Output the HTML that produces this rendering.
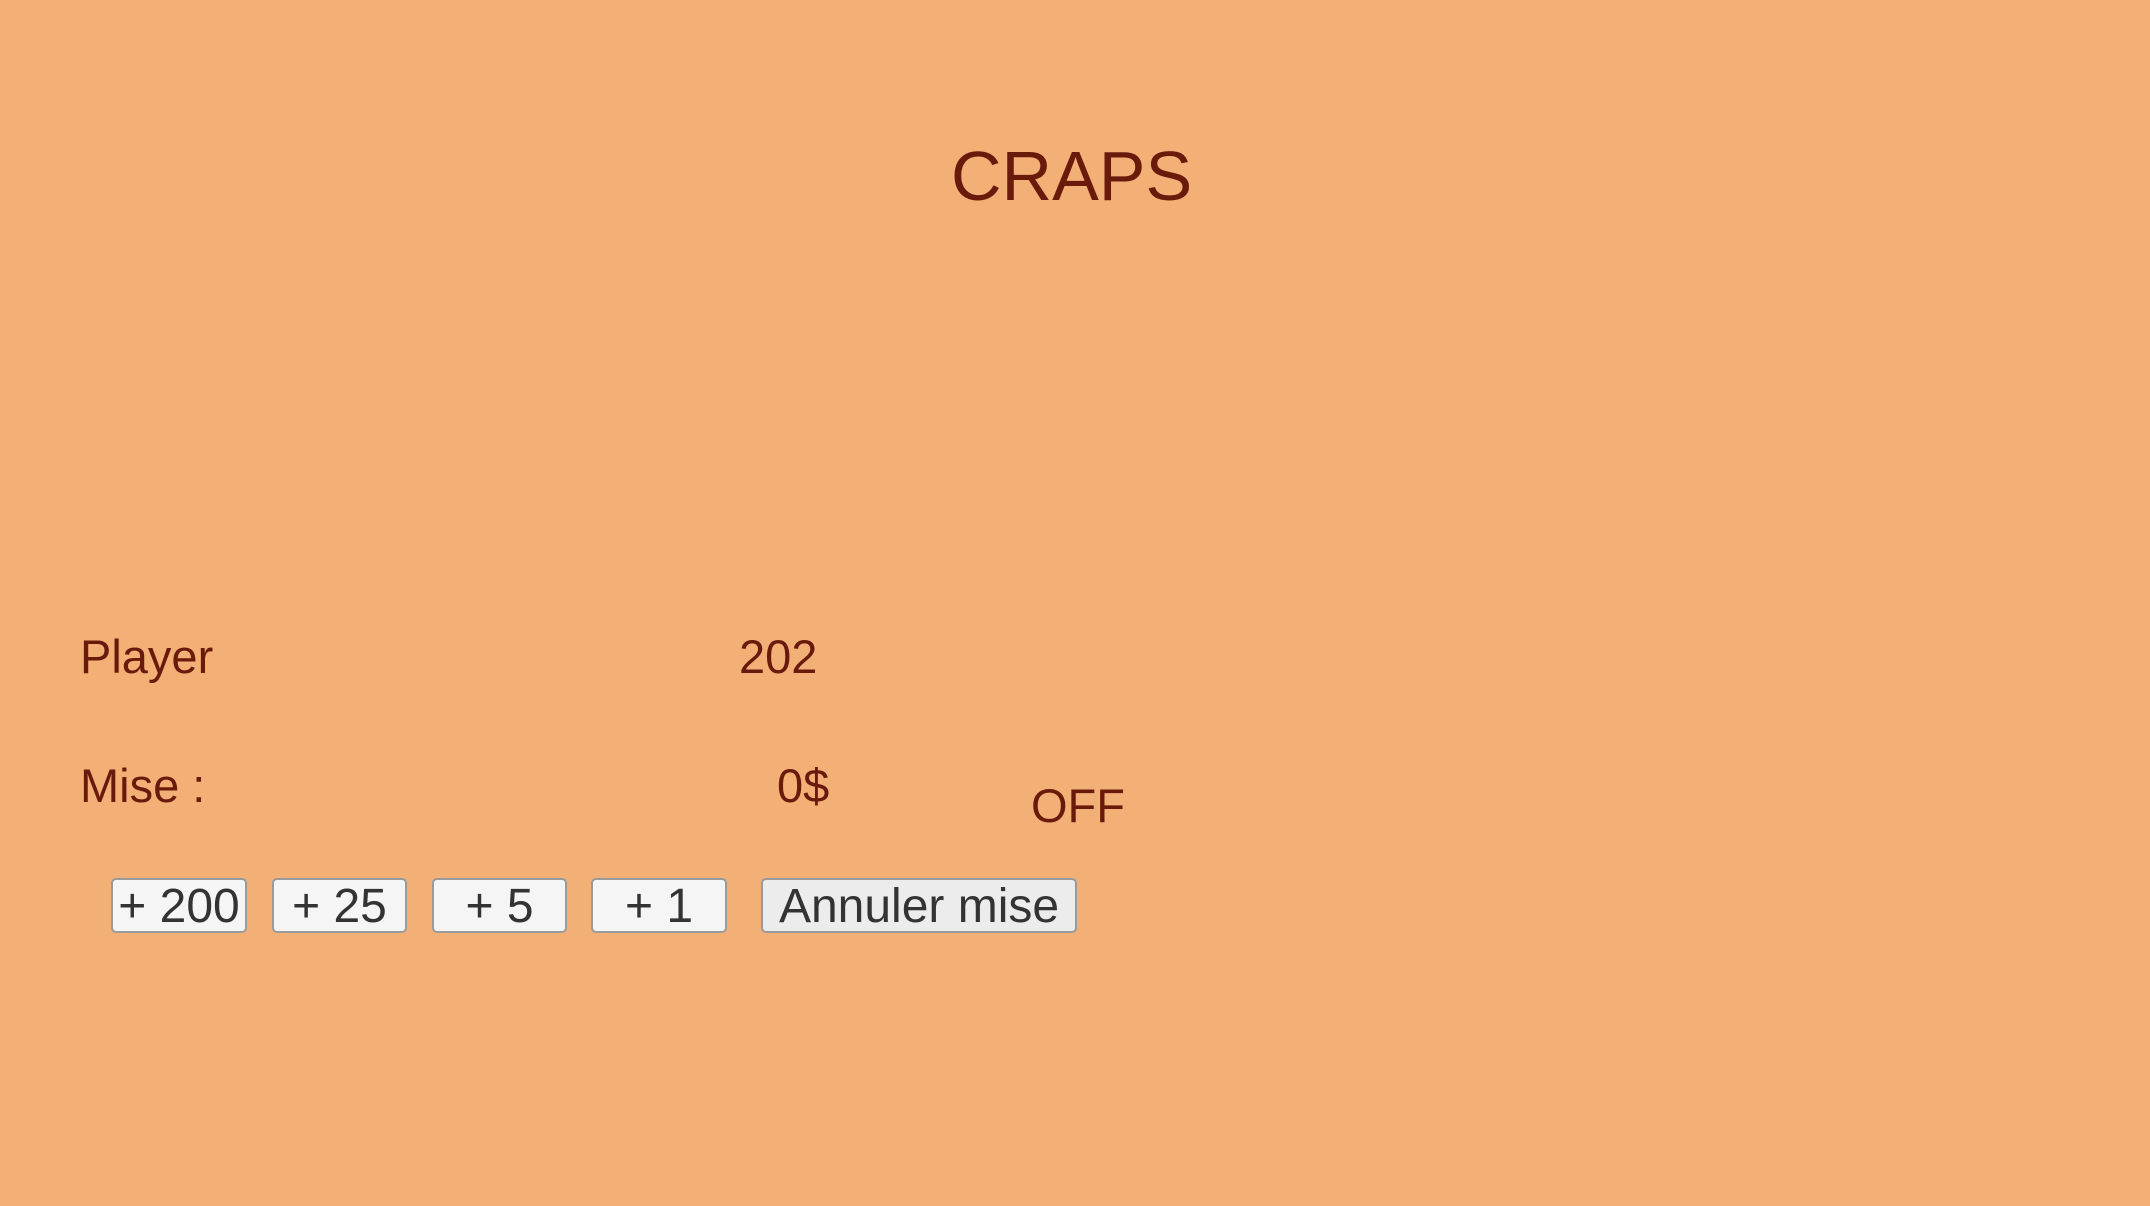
<!DOCTYPE html>
<html><head><meta charset="utf-8"><style>
html,body{margin:0;padding:0;}
body{width:2150px;height:1206px;background:#f2b077;position:relative;overflow:hidden;font-family:"Liberation Sans",sans-serif;}
.t{position:absolute;line-height:1;white-space:nowrap;color:#6a1a0b;font-size:47px;}
.b{position:absolute;top:878px;height:55px;box-sizing:border-box;border:2px solid #9a9a9a;border-radius:5px;background:#f5f5f5;color:#333;font-size:48px;line-height:53px;text-align:center;white-space:nowrap;}
</style></head><body>
<div class="t" style="left:951px;top:141px;font-size:70px;">CRAPS</div>
<div class="t" style="left:80px;top:633px;">Player</div>
<div class="t" style="left:739px;top:633px;">202</div>
<div class="t" style="left:80px;top:762px;">Mise :</div>
<div class="t" style="left:777px;top:762px;">0$</div>
<div class="t" style="left:1031px;top:782px;">OFF</div>
<div class="b" style="left:111px;width:136px;">+ 200</div>
<div class="b" style="left:272px;width:135px;">+ 25</div>
<div class="b" style="left:432px;width:135px;">+ 5</div>
<div class="b" style="left:591px;width:136px;">+ 1</div>
<div class="b" style="left:761px;width:316px;background:#ececec;">Annuler mise</div>
</body></html>
